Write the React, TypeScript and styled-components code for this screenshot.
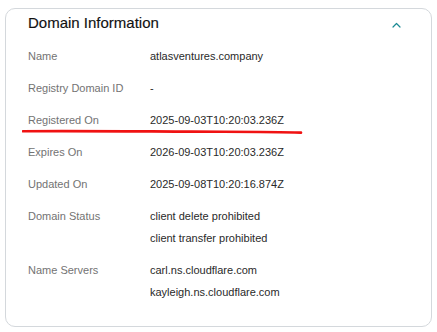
import React from "react";
import styled, { createGlobalStyle } from "styled-components";

const Global = createGlobalStyle`
  html, body { margin: 0; padding: 0; background: #ffffff; }
  body { font-family: "Liberation Sans", Arial, sans-serif; }
`;

const Page = styled.div`
  padding: 8px 5px 7px 5px;
  width: 437px;
  box-sizing: border-box;
`;

const Card = styled.section`
  position: relative;
  border: 1px solid #d4d8dc;
  border-radius: 10px;
  padding: 0 22px 23px 22px;
  background: #fff;
`;

const Header = styled.div`
  display: flex;
  align-items: center;
  justify-content: space-between;
  height: 25px;
  padding-top: 1px;
`;

const Title = styled.h2`
  margin: 0;
  font-size: 15px;
  font-weight: 400;
  color: #111111;
  line-height: 25px;
  -webkit-text-stroke: 0.15px #111;
`;

const Toggle = styled.span`
  display: flex;
  width: 14px;
  height: 14px;
  margin-right: 6px;
  margin-top: 5px;
  align-items: center;
  justify-content: center;
  color: #1b8a94;
`;

const List = styled.dl`
  margin: 10px 0 0 0;
  display: flex;
  flex-direction: column;
  gap: 10px;
`;

const Row = styled.div`
  display: grid;
  grid-template-columns: 122px 1fr;
`;

const Label = styled.dt`
  font-size: 11px;
  line-height: 22px;
  color: #737373;
`;

const Values = styled.dd`
  margin: 0;
  display: flex;
  flex-direction: column;
`;

const Value = styled.span`
  font-size: 11px;
  line-height: 22px;
  color: #2a2a2a;
`;

const Mark = styled.svg`
  position: absolute;
  left: 16px;
  top: 119px;
  pointer-events: none;
`;

const rows: { label: string; values: string[] }[] = [
  { label: "Name", values: ["atlasventures.company"] },
  { label: "Registry Domain ID", values: ["-"] },
  { label: "Registered On", values: ["2025-09-03T10:20:03.236Z"] },
  { label: "Expires On", values: ["2026-09-03T10:20:03.236Z"] },
  { label: "Updated On", values: ["2025-09-08T10:20:16.874Z"] },
  { label: "Domain Status", values: ["client delete prohibited", "client transfer prohibited"] },
  { label: "Name Servers", values: ["carl.ns.cloudflare.com", "kayleigh.ns.cloudflare.com"] },
];

export default function App() {
  return (
    <Page>
      <Global />
      <Card>
        <Header>
          <Title>Domain Information</Title>
          <Toggle>
            <svg width="9" height="6" viewBox="0 0 9 6" fill="none">
              <path d="M1 5 L4.5 1.5 L8 5" stroke="currentColor" strokeWidth="1.2" strokeLinecap="round" strokeLinejoin="round" />
            </svg>
          </Toggle>
        </Header>
        <List>
          {rows.map((r) => (
            <Row key={r.label}>
              <Label>{r.label}</Label>
              <Values>
                {r.values.map((v) => (
                  <Value key={v}>{v}</Value>
                ))}
              </Values>
            </Row>
          ))}
        </List>
        <Mark width="282" height="8" viewBox="0 0 282 8">
          <path d="M1 3.2 C 60 2.8, 120 3.4, 170 3.6 S 250 3.6, 279 4.6" stroke="#f01212" strokeWidth="2.6" strokeLinecap="round" fill="none" />
        </Mark>
      </Card>
    </Page>
  );
}
